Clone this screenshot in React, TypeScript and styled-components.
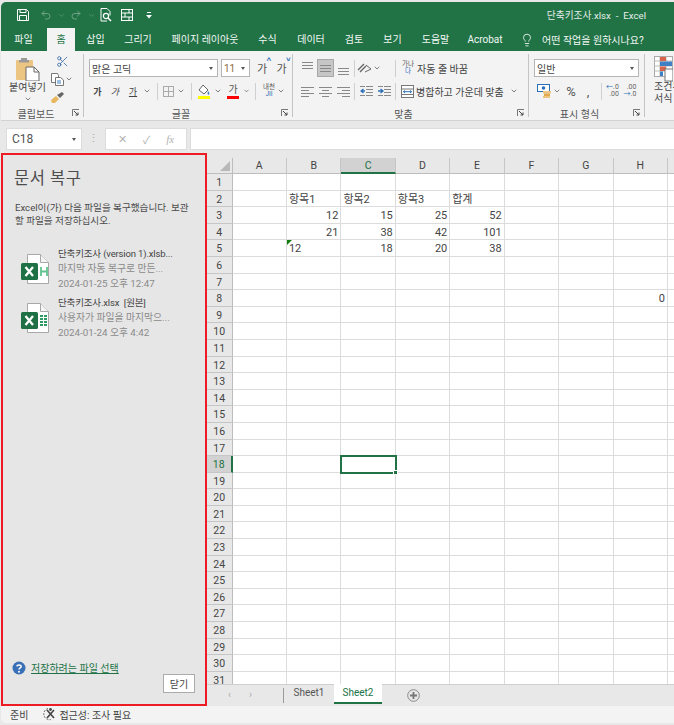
import { FC, ReactNode } from "react";
import styled, { createGlobalStyle } from "styled-components";
import { Lightbulb, Scissors, Undo2, Redo2, ChevronDown } from "lucide-react";

const font = `Roboto, "Noto Sans CJK KR", sans-serif`;

const GlobalStyle = createGlobalStyle`
  *, *::before, *::after { box-sizing: border-box; }
  html, body { margin: 0; padding: 0; background: #e8e8e8; }
  body { font-family: ${font}; color: #444; overflow: hidden; }
`;

const COLS = ["A", "B", "C", "D", "E", "F", "G", "H", "I"];
const ROW_COUNT = 31;

type Cell = { text: string; left?: boolean; flag?: boolean };
const CELLS: Record<string, Cell> = {
  B2: { text: "항목1", left: true },
  C2: { text: "항목2", left: true },
  D2: { text: "항목3", left: true },
  E2: { text: "합계", left: true },
  B3: { text: "12" },
  C3: { text: "15" },
  D3: { text: "25" },
  E3: { text: "52" },
  B4: { text: "21" },
  C4: { text: "38" },
  D4: { text: "42" },
  E4: { text: "101" },
  B5: { text: "12", left: true, flag: true },
  C5: { text: "18" },
  D5: { text: "20" },
  E5: { text: "38" },
  H8: { text: "0" },
};

const TABS = [
  { label: "파일", w: 39 },
  { label: "홈", w: 28, active: true },
  { label: "삽입", w: 41 },
  { label: "그리기", w: 44 },
  { label: "페이지 레이아웃", w: 90 },
  { label: "수식", w: 35 },
  { label: "데이터", w: 52 },
  { label: "검토", w: 34 },
  { label: "보기", w: 43 },
  { label: "도움말", w: 43 },
  { label: "Acrobat", w: 56 },
];

const Chevron: FC = () => <ChevronDown size={8} strokeWidth={2.2} color="#555" />;

const Launcher: FC = () => (
  <svg width="8" height="8" viewBox="0 0 8 8">
    <path d="M.5 7V.5H7" fill="none" stroke="#777" />
    <path d="M2 2l4 4M6 3.5V6H3.5" fill="none" stroke="#444" />
  </svg>
);

const SaveIcon: FC = () => (
  <svg width="12" height="12" viewBox="0 0 12 12" fill="none" stroke="#fff">
    <path d="M.5.5h9l2 2v9H.5z" />
    <path d="M3 .5v3h6v-3M2.5 11.5V6.5h7v5" />
  </svg>
);

const PreviewIcon: FC = () => (
  <svg width="12" height="14" viewBox="0 0 12 14" fill="none" stroke="#fff">
    <path d="M1 .5h6l3 3v4M1 .5v12.5h6" />
    <circle cx="6" cy="8" r="2.6" strokeWidth="1.2" />
    <path d="M8 10l3 3" strokeWidth="1.6" />
  </svg>
);

const FormIcon: FC = () => (
  <svg width="12" height="12" viewBox="0 0 12 12" fill="none" stroke="#fff">
    <rect x=".5" y=".5" width="11" height="11" />
    <path d="M.5 4h11M.5 8h11M4 4v4M8 8v3.5M8 .5V4" />
  </svg>
);

const CustomizeIcon: FC = () => (
  <svg width="6" height="7" viewBox="0 0 6 7" fill="#fff">
    <rect x="1" y="0" width="4" height="1" />
    <path d="M0 3h6L3 6.5z" />
  </svg>
);

const PasteIcon: FC = () => (
  <svg width="24" height="24" viewBox="0 0 24 24">
    <rect x="0" y="3" width="17" height="20" rx="1" fill="#edc583" />
    <path d="M5 3V1h6v2h2v2.500H3V3z" fill="#9a9a9a" />
    <path d="M10 10h8l5 5v9H10z" fill="#fff" stroke="#666" />
    <path d="M18 10v5h5" fill="none" stroke="#666" />
  </svg>
);

const CopyIcon: FC = () => (
  <svg width="13" height="13" viewBox="0 0 13 13" fill="#fff" stroke="#777">
    <path d="M.5.5h6l1 2v7H.5z" />
    <path d="M4.500 4.500h5l3 2.500v5.500h-8z" />
    <path d="M6 8h4M6 10h4" stroke="#3b7fc4" />
  </svg>
);

const PainterIcon: FC = () => (
  <svg width="13" height="11" viewBox="0 0 13 11">
    <path d="M0 8l5-4 3 3-4 4H1z" fill="#e8b860" />
    <path d="M6 3l3 3 4-4-2-2z" fill="#666" />
  </svg>
);

const BorderIcon: FC = () => (
  <svg width="11" height="11" viewBox="0 0 11 11" fill="none" stroke="#aaa">
    <rect x=".5" y=".5" width="10" height="10" />
    <path d="M5.500.5v10M.5 5.500h10" />
  </svg>
);

const FillIcon: FC = () => (
  <svg width="14" height="15" viewBox="0 0 14 15">
    <path d="M6 1l5 5-4 4-5-4z" fill="#fff" stroke="#666" />
    <path d="M11 7c1 1.500 2 2.500 1 3.500s-2-.5-1-3.500z" fill="#3b7fc4" />
    <rect x="1" y="12" width="12" height="3" fill="#ffff00" />
  </svg>
);

const Lines: FC<{ ys: number[]; x1?: number[]; x2?: number[] }> = ({ ys, x1, x2 }) => (
  <svg width="13" height="13" viewBox="0 0 13 13" stroke="#888" fill="none">
    {ys.map((y, i) => (
      <path key={y} d={`M${x1 ? x1[i] : 0} ${y + 0.5}H${x2 ? x2[i] : 13}`} />
    ))}
  </svg>
);

const OrientIcon: FC = () => (
  <svg width="15" height="13" viewBox="0 0 15 13" fill="none">
    <path d="M1 8l6-6M3 10l6-6" stroke="#666" strokeWidth="1.400" />
    <path d="M9 3l5 4-6 3" stroke="#666" />
  </svg>
);

const IndentIcon: FC<{ flip?: boolean }> = ({ flip }) => (
  <svg width="13" height="11" viewBox="0 0 13 11" fill="none">
    <path d="M6 .5h7M6 3.500h7M6 6.500h7M6 9.500h7M0 .5h5M0 9.500h5" stroke="#888" />
    {flip ? (
      <path d="M0 5h4M2.500 3L5 5 2.500 7" stroke="#2b6fb8" strokeWidth="1.300" />
    ) : (
      <path d="M5 5H1M3.500 3L1 5l2.500 2" stroke="#2b6fb8" strokeWidth="1.300" />
    )}
  </svg>
);

const MergeIcon: FC = () => (
  <svg width="13" height="13" viewBox="0 0 13 13" fill="#fff" stroke="#777">
    <rect x=".5" y=".5" width="12" height="12" />
    <path d="M.5 4h12M.5 9.500h12" />
    <path d="M2.500 6.700h8M4 5.500L2.500 6.700 4 8M9 5.500l1.500 1.200L9 8" stroke="#2b6fb8" fill="none" />
  </svg>
);

const MoneyIcon: FC = () => (
  <svg width="14" height="14" viewBox="0 0 14 14">
    <rect x=".5" y=".5" width="12" height="7" fill="#fff" stroke="#2b6fb8" />
    <circle cx="6.500" cy="4" r="1.800" fill="#2b6fb8" />
    <rect x="6" y="7" width="8" height="2.500" fill="#edc583" />
    <rect x="7" y="9.500" width="6" height="2.500" fill="#e0a94e" />
    <rect x="6" y="12" width="7" height="2" fill="#edc583" />
  </svg>
);

const DecimalIcon: FC<{ more?: boolean }> = ({ more }) => (
  <DecimalBox>
    <DecimalLine>
      {more ? <Arrow>←</Arrow> : null}
      {more ? ".0" : ".00"}
    </DecimalLine>
    <DecimalLine>
      {more ? null : <Arrow>→</Arrow>}
      {more ? ".00" : ".0"}
    </DecimalLine>
  </DecimalBox>
);

const CondIcon: FC = () => (
  <svg width="19" height="26" viewBox="0 0 19 26">
    <rect x=".5" y=".5" width="18" height="20" fill="#fff" stroke="#aaa" />
    <path d="M.5 5h18M.5 10h18M.5 15h18M6 .5v20M12 .5v20" stroke="#bbb" />
    <rect x="6" y="1" width="6" height="4" fill="#d9634a" />
    <rect x="6" y="5.500" width="12" height="4.500" fill="#3f7fc4" />
    <rect x="6" y="10.500" width="6" height="4.500" fill="#d9634a" />
    <rect x="6" y="15.500" width="3" height="4.500" fill="#3f7fc4" />
    <rect x="11" y="13" width="8" height="12" fill="#fff" stroke="#777" />
  </svg>
);

const FileIcon: FC<{ kind: "h" | "bars" }> = ({ kind }) => (
  <svg width="28" height="30" viewBox="0 0 28 30">
    <path d="M6.500.5h13l8 8v21h-21z" fill="#fff" stroke="#a8a8a8" />
    <path d="M19.500.5v8h8" fill="#f4f4f4" stroke="#a8a8a8" />
    {kind === "h" ? (
      <path d="M20 13v9M26 13v9M20 17.500h6" stroke="#5fc38d" strokeWidth="1.800" fill="none" />
    ) : (
      <path d="M19 13h7M19 16h7M19 19h7M19 22h7" stroke="#2e9a63" strokeWidth="1.800" fill="none" strokeDasharray="3 1" />
    )}
    <rect x="0" y="9" width="17" height="17" rx="1.500" fill="#1e7145" />
    <path d="M4.500 13l7.500 9M12 13l-7.500 9" stroke="#fff" strokeWidth="2.300" fill="none" />
  </svg>
);

const HelpIcon: FC = () => (
  <svg width="14" height="14" viewBox="0 0 14 14">
    <circle cx="7" cy="7" r="6.500" fill="#3a70b5" />
    <path d="M4.800 5.300C5 3.500 9 3.500 9.200 5.400 9.300 7 7 6.800 7 8.600" fill="none" stroke="#fff" strokeWidth="1.500" />
    <circle cx="7" cy="10.700" r="1" fill="#fff" />
  </svg>
);

const AccessIcon: FC = () => (
  <svg width="15" height="14" viewBox="0 0 15 14" fill="none">
    <path d="M6 1.500A5 5 0 1 0 9 12.500" stroke="#666" strokeDasharray="2 1.200" />
    <path d="M5 3l7 8M12 3l-7 8" stroke="#444" strokeWidth="1.600" />
    <circle cx="8.500" cy="2.500" r="1.400" fill="#444" />
  </svg>
);

const AddIcon: FC = () => (
  <svg width="13" height="13" viewBox="0 0 13 13">
    <circle cx="6.500" cy="6.500" r="5.800" fill="none" stroke="#888" />
    <path d="M6.500 3v7M3 6.500h7" stroke="#777" strokeWidth="1.800" />
  </svg>
);

const Group: FC<{ w: number; label?: string; children: ReactNode }> = ({ w, label, children }) => (
  <GroupBox $w={w}>
    <GroupBody>{children}</GroupBody>
    {label ? (
      <GroupFoot>
        <GroupLabel>{label}</GroupLabel>
        <LauncherBox>
          <Launcher />
        </LauncherBox>
      </GroupFoot>
    ) : null}
  </GroupBox>
);

const App: FC = () => {
  const rows = Array.from({ length: ROW_COUNT }, (_, i) => i + 1);
  return (
    <Page>
      <GlobalStyle />
      <TitleBar>
        <QuickBar>
          <QuickSlot $w={24}><SaveIcon /></QuickSlot>
          <QuickSlot $w={22} $dim><Undo2 size={12} color="#fff" /></QuickSlot>
          <QuickSlot $w={8} $dim><ChevronDown size={7} color="#fff" /></QuickSlot>
          <QuickSlot $w={22} $dim><Redo2 size={12} color="#fff" /></QuickSlot>
          <QuickSlot $w={8} $dim><ChevronDown size={7} color="#fff" /></QuickSlot>
          <QuickSlot $w={22}><PreviewIcon /></QuickSlot>
          <QuickSlot $w={20}><FormIcon /></QuickSlot>
          <QuickSlot $w={24}><CustomizeIcon /></QuickSlot>
        </QuickBar>
        <DocTitle>단축키조사.xlsx&nbsp; - &nbsp;Excel</DocTitle>
      </TitleBar>

      <TabBar>
        {TABS.map((t) => (
          <Tab key={t.label} $w={t.w} $active={t.active}>{t.label}</Tab>
        ))}
        <SearchHint>
          <Lightbulb size={14} strokeWidth={1.4} color="#fff" />
          <span>어떤 작업을 원하시나요?</span>
        </SearchHint>
      </TabBar>

      <Ribbon>
        <Group w={80} label="클립보드">
          <ClipLayout>
            <PasteColumn>
              <PasteIcon />
              <PasteLabel>붙여넣기</PasteLabel>
              <Chevron />
            </PasteColumn>
            <ClipTools>
              <Slot $w={24} $h={18}><Scissors size={13} strokeWidth={1.4} color="#2b5f9e" /></Slot>
              <ToolRow>
                <Slot $w={14} $h={18}><CopyIcon /></Slot>
                <Slot $w={10} $h={18}><Chevron /></Slot>
              </ToolRow>
              <Slot $w={14} $h={18}><PainterIcon /></Slot>
            </ClipTools>
          </ClipLayout>
        </Group>
        <Divider />
        <Group w={208} label="글꼴">
          <ToolRow>
            <SelectBox $w={129}><span>맑은 고딕</span><Caret /></SelectBox>
            <SelectBox $w={29} $ml={3} $accent><span>11</span><Caret /></SelectBox>
            <Slot $w={20} $ml={2}><BigGa>가<Up>˄</Up></BigGa></Slot>
            <Slot $w={19}><BigGa>가<Up>˅</Up></BigGa></Slot>
          </ToolRow>
          <ToolRow>
            <Slot $w={17}><SmallGa $bold>가</SmallGa></Slot>
            <Slot $w={18}><SmallGa $italic>가</SmallGa></Slot>
            <Slot $w={18}><SmallGa $under>가</SmallGa></Slot>
            <Slot $w={10}><Chevron /></Slot>
            <RowSep $l={5} $r={4} />
            <Slot $w={13}><BorderIcon /></Slot>
            <Slot $w={12}><Chevron /></Slot>
            <RowSep $l={4} $r={4} />
            <Slot $w={16}><FillIcon /></Slot>
            <Slot $w={11}><Chevron /></Slot>
            <Slot $w={20}><ColorGa>가</ColorGa></Slot>
            <Slot $w={7}><Chevron /></Slot>
            <RowSep $l={5} $r={5} />
            <Slot $w={16}>
              <WrapGlyph>내천<Blue>JII</Blue></WrapGlyph>
            </Slot>
            <Slot $w={8}><Chevron /></Slot>
          </ToolRow>
        </Group>
        <Divider />
        <Group w={235} label="맞춤">
          <ToolRow>
            <Slot $w={19}><Lines ys={[0, 3, 6]} x1={[1, 1, 1]} x2={[12, 12, 12]} /></Slot>
            <Slot $w={17} $pressed><Lines ys={[3, 6, 9]} x1={[1, 1, 1]} x2={[12, 12, 12]} /></Slot>
            <Slot $w={18}><Lines ys={[6, 9, 12]} x1={[1, 1, 1]} x2={[12, 12, 12]} /></Slot>
            <RowSep $l={2} $r={2} />
            <Slot $w={15}><OrientIcon /></Slot>
            <Slot $w={10}><Chevron /></Slot>
            <RowSep $l={13} $r={3} />
            <Slot $w={18}><WrapGlyph>가나<Blue>다</Blue></WrapGlyph></Slot>
            <ToolText>자동 줄 바꿈</ToolText>
          </ToolRow>
          <ToolRow>
            <Slot $w={18}><Lines ys={[2, 5, 8, 11]} x2={[13, 8, 13, 8]} /></Slot>
            <Slot $w={18}><Lines ys={[2, 5, 8, 11]} x1={[0, 3, 0, 3]} x2={[13, 10, 13, 10]} /></Slot>
            <Slot $w={18}><Lines ys={[2, 5, 8, 11]} x1={[0, 5, 0, 5]} /></Slot>
            <RowSep $l={2} $r={2} />
            <Slot $w={18}><IndentIcon /></Slot>
            <Slot $w={18}><IndentIcon flip /></Slot>
            <RowSep $l={2} $r={3} />
            <Slot $w={17}><MergeIcon /></Slot>
            <ToolText>병합하고 가운데 맞춤</ToolText>
            <Slot $w={16} $ml={2}><Chevron /></Slot>
          </ToolRow>
        </Group>
        <Divider />
        <Group w={115} label="표시 형식">
          <ToolRow>
            <SelectBox $w={105}><span>일반</span><Caret /></SelectBox>
          </ToolRow>
          <ToolRow>
            <Slot $w={19}><MoneyIcon /></Slot>
            <Slot $w={8}><Chevron /></Slot>
            <Slot $w={20}><Percent>%</Percent></Slot>
            <Slot $w={14}><Percent>,</Percent></Slot>
            <RowSep $l={6} $r={3} />
            <Slot $w={15}><DecimalIcon more /></Slot>
            <Slot $w={20}><DecimalIcon /></Slot>
          </ToolRow>
        </Group>
        <Divider />
        <CondGroup>
          <CondIcon />
          <CondLabel>조건부<br />서식</CondLabel>
        </CondGroup>
      </Ribbon>

      <FormulaRow>
        <NameBox><span>C18</span><Caret /></NameBox>
        <GripDots>⋮</GripDots>
        <FxBox>
          <span>✕</span>
          <span>✓</span>
          <Fx>fx</Fx>
        </FxBox>
        <FormulaInput />
      </FormulaRow>

      <Main>
        <RecoveryPanel>
          <PanelTitle>문서 복구</PanelTitle>
          <PanelText>Excel이(가) 다음 파일을 복구했습니다. 보관할 파일을 저장하십시오.</PanelText>
          <FileList>
            <FileItem>
              <FileIcon kind="h" />
              <FileInfo>
                <FileName>단축키조사 (version 1).xlsb...</FileName>
                <FileMeta>마지막 자동 복구로 만든...</FileMeta>
                <FileMeta>2024-01-25 오후 12:47</FileMeta>
              </FileInfo>
            </FileItem>
            <FileItem>
              <FileIcon kind="bars" />
              <FileInfo>
                <FileName>단축키조사.xlsx&nbsp; [원본]</FileName>
                <FileMeta>사용자가 파일을 마지막으...</FileMeta>
                <FileMeta>2024-01-24 오후 4:42</FileMeta>
              </FileInfo>
            </FileItem>
          </FileList>
          <PanelFoot>
            <HelpRow>
              <HelpIcon />
              <HelpLink>저장하려는 파일 선택</HelpLink>
            </HelpRow>
            <CloseButton>닫기</CloseButton>
          </PanelFoot>
        </RecoveryPanel>

        <SheetArea>
          <SheetGrid>
            <Corner><CornerMark /></Corner>
            {COLS.map((c) => (
              <ColHead key={c} $active={c === "C"}>{c}</ColHead>
            ))}
            {rows.map((r) => [
              <RowHead key={`h${r}`} $active={r === 18}>{r}</RowHead>,
              ...COLS.map((c) => {
                const cell = CELLS[`${c}${r}`];
                return (
                  <GridCell key={`${c}${r}`} $left={cell?.left} $selected={c === "C" && r === 18} $flag={cell?.flag}>
                    {cell?.text}
                  </GridCell>
                );
              }),
            ])}
          </SheetGrid>
          <SheetTabs>
            <NavArrow>‹</NavArrow>
            <NavArrow>›</NavArrow>
            <TabSep />
            <SheetTab $w={50}>Sheet1</SheetTab>
            <SheetTab $w={48} $active>Sheet2</SheetTab>
            <AddSheet><AddIcon /></AddSheet>
          </SheetTabs>
        </SheetArea>
      </Main>

      <StatusBar>
        <span>준비</span>
        <AccessBox>
          <AccessIcon />
          <AccessText>접근성: 조사 필요</AccessText>
        </AccessBox>
      </StatusBar>
    </Page>
  );
};

const Page = styled.div`
  width: 674px;
  height: 725px;
  padding-top: 2px;
  display: flex;
  flex-direction: column;
  overflow: hidden;
  background: #e8e8e8;
  font-size: 10.5px;
`;

const TitleBar = styled.div`
  height: 23px;
  margin-left: 1px;
  background: #217346;
  border-radius: 5px 0 0 0;
  display: flex;
  align-items: center;
  justify-content: space-between;
  padding: 3px 28px 0 10px;
  flex: none;
`;

const QuickBar = styled.div`
  display: flex;
  align-items: center;
`;

const QuickSlot = styled.div<{ $w: number; $dim?: boolean }>`
  width: ${(p) => p.$w}px;
  display: flex;
  justify-content: center;
  opacity: ${(p) => (p.$dim ? 0.35 : 1)};
`;

const DocTitle = styled.div`
  color: #e4efe9;
  font-size: 9.7px;
`;

const TabBar = styled.div`
  height: 26px;
  margin-left: 1px;
  padding-left: 3px;
  background: #217346;
  display: flex;
  align-items: flex-end;
  flex: none;
`;

const Tab = styled.div<{ $w: number; $active?: boolean }>`
  width: ${(p) => p.$w}px;
  margin-left: ${(p) => (p.$active ? 4 : 0)}px;
  height: 23px;
  line-height: 23px;
  text-align: center;
  color: ${(p) => (p.$active ? "#217346" : "#f2f7f4")};
  background: ${(p) => (p.$active ? "#f3f3f3" : "transparent")};
  font-size: 10px;
  white-space: nowrap;
`;

const SearchHint = styled.div`
  display: flex;
  align-items: center;
  gap: 8px;
  height: 23px;
  margin-left: 7px;
  color: #f2f7f4;
  font-size: 10px;
  white-space: nowrap;
`;

const Ribbon = styled.div`
  height: 70px;
  background: #f3f3f3;
  border-bottom: 1px solid #d2d2d2;
  display: flex;
  padding-left: 2px;
  flex: none;
  margin-left: 1px;
  overflow: hidden;
`;

const Divider = styled.div`
  width: 1px;
  margin: 3px 0 3px;
  background: #c4c4c4;
  flex: none;
`;

const GroupBox = styled.div<{ $w: number }>`
  width: ${(p) => p.$w}px;
  flex: none;
  display: flex;
  flex-direction: column;
`;

const GroupBody = styled.div`
  flex: 1;
  min-height: 0;
  padding: 8px 0 0 5px;
  display: flex;
  flex-direction: column;
  gap: 5px;
`;

const GroupFoot = styled.div`
  height: 14px;
  display: flex;
  align-items: center;
  flex: none;
`;

const GroupLabel = styled.div`
  flex: 1;
  text-align: center;
  font-size: 10px;
  color: #555;
`;

const LauncherBox = styled.div`
  width: 14px;
  display: flex;
  justify-content: center;
`;

const ToolRow = styled.div`
  display: flex;
  align-items: center;
  height: 18px;
`;

const Slot = styled.div<{ $w: number; $h?: number; $ml?: number; $pressed?: boolean }>`
  width: ${(p) => p.$w}px;
  height: ${(p) => p.$h ?? 18}px;
  margin-left: ${(p) => p.$ml ?? 0}px;
  flex: none;
  display: flex;
  align-items: center;
  justify-content: center;
  background: ${(p) => (p.$pressed ? "#c6c6c6" : "transparent")};
  border: ${(p) => (p.$pressed ? "1px solid #a8a8a8" : "none")};
`;

const RowSep = styled.div<{ $l: number; $r: number }>`
  width: 1px;
  height: 17px;
  background: #cfcfcf;
  margin: 0 ${(p) => p.$r}px 0 ${(p) => p.$l}px;
  flex: none;
`;

const ClipLayout = styled.div`
  display: flex;
  margin-top: -4px;
`;

const PasteColumn = styled.div`
  width: 45px;
  margin-left: -3px;
  display: flex;
  flex-direction: column;
  align-items: center;
  padding-top: 2px;
  flex: none;
`;

const PasteLabel = styled.div`
  font-size: 10px;
  line-height: 14px;
  white-space: nowrap;
`;

const ClipTools = styled.div`
  display: flex;
  flex-direction: column;
  margin-top: -3px;
`;

const SelectBox = styled.div<{ $w: number; $ml?: number; $accent?: boolean }>`
  width: ${(p) => p.$w}px;
  height: 18px;
  margin-left: ${(p) => p.$ml ?? 0}px;
  flex: none;
  background: #fff;
  border: 1px solid #b5b5b5;
  display: flex;
  align-items: center;
  justify-content: space-between;
  padding: 0 4px 0 2px;
  font-size: 10px;
  color: ${(p) => (p.$accent ? "#8a6a35" : "#444")};
`;

const Caret = styled.i`
  width: 0;
  height: 0;
  border-left: 2.5px solid transparent;
  border-right: 2.5px solid transparent;
  border-top: 3px solid #555;
`;

const BigGa = styled.span`
  position: relative;
  font-size: 11px;
  color: #555;
`;

const Up = styled.b`
  position: absolute;
  right: -4px;
  top: -5px;
  color: #2b6fb8;
  font-size: 8px;
`;

const SmallGa = styled.span<{ $bold?: boolean; $italic?: boolean; $under?: boolean }>`
  font-size: 9px;
  font-weight: ${(p) => (p.$bold ? 700 : 400)};
  font-style: ${(p) => (p.$italic ? "italic" : "normal")};
  text-decoration: ${(p) => (p.$under ? "underline" : "none")};
  color: #444;
`;

const ColorGa = styled.span`
  font-size: 10px;
  line-height: 13px;
  border-bottom: 3px solid #ff0000;
  padding: 0 1.5px;
  color: #555;
`;

const WrapGlyph = styled.span`
  display: flex;
  flex-direction: column;
  align-items: center;
  font-size: 6.5px;
  line-height: 7px;
  color: #555;
`;

const Blue = styled.span`
  color: #2b6fb8;
`;

const ToolText = styled.span`
  font-size: 10px;
  white-space: nowrap;
  color: #444;
`;

const Percent = styled.span`
  font-size: 13px;
  color: #555;
`;

const DecimalBox = styled.div`
  display: flex;
  flex-direction: column;
  align-items: flex-end;
  font-size: 7px;
  line-height: 7px;
  color: #666;
`;

const DecimalLine = styled.div`
  display: flex;
`;

const Arrow = styled.span`
  color: #2b6fb8;
`;

const CondGroup = styled.div`
  width: 30px;
  flex: none;
  display: flex;
  flex-direction: column;
  align-items: flex-start;
  padding: 5px 0 0 9px;
  font-size: 10px;
  line-height: 12px;
  white-space: nowrap;
`;

const CondLabel = styled.div`
  margin-top: -1px;
`;

const FormulaRow = styled.div`
  height: 31px;
  flex: none;
  padding: 7px 0 2px 6px;
  display: flex;
  background: #e8e8e8;
`;

const NameBox = styled.div`
  width: 76px;
  flex: none;
  background: #fff;
  border: 1px solid #dcdcdc;
  display: flex;
  align-items: center;
  justify-content: space-between;
  padding: 0 5px;
  font-size: 12px;
  color: #555;
`;

const GripDots = styled.div`
  width: 23px;
  text-align: center;
  line-height: 22px;
  color: #aaa;
  font-size: 11px;
`;

const FxBox = styled.div`
  width: 82px;
  flex: none;
  background: #fff;
  border: 1px solid #dcdcdc;
  display: flex;
  align-items: center;
  justify-content: space-around;
  padding: 0 4px;
  color: #b4b4b4;
  font-size: 11px;
`;

const Fx = styled.i`
  font-family: "Liberation Serif", serif;
`;

const FormulaInput = styled.div`
  flex: 1;
  margin-left: 3px;
  background: #fff;
  border: 1px solid #dcdcdc;
  border-right: none;
`;

const Main = styled.div`
  flex: 1;
  min-height: 0;
  display: flex;
`;

const RecoveryPanel = styled.aside`
  width: 206px;
  margin: 1px 0 0 1px;
  flex: none;
  border: 2px solid #ed1c24;
  background: #e6e6e6;
  padding: 12px 8px 11px 10px;
  display: flex;
  flex-direction: column;
`;

const PanelTitle = styled.h2`
  margin: 0 0 0 1px;
  font-size: 16.5px;
  font-weight: 400;
  line-height: 24px;
  letter-spacing: 0.5px;
  color: #4d4d4d;
`;

const PanelText = styled.p`
  margin: 11px 0 0 2px;
  font-size: 9.6px;
  line-height: 12.5px;
  color: #4a4a4a;
`;

const FileList = styled.div`
  margin: 24px 0 0 8px;
  display: flex;
  flex-direction: column;
  gap: 2px;
`;

const FileItem = styled.div`
  display: flex;
  align-items: flex-start;
  gap: 9px;
  height: 47px;
  svg {
    margin-top: 3px;
    flex: none;
  }
`;

const FileInfo = styled.div`
  display: flex;
  flex-direction: column;
  gap: 1px;
  margin-top: -4px;
`;

const FileName = styled.div`
  font-size: 9.5px;
  line-height: 14px;
  letter-spacing: -0.15px;
  color: #444;
  white-space: nowrap;
`;

const FileMeta = styled.div`
  font-size: 9.8px;
  line-height: 14px;
  color: #8a8a8a;
  white-space: nowrap;
`;

const PanelFoot = styled.div`
  margin-top: auto;
  display: flex;
  flex-direction: column;
  padding-right: 2px;
`;

const HelpRow = styled.div`
  display: flex;
  align-items: center;
  gap: 5px;
  margin-left: -1px;
`;

const HelpLink = styled.span`
  color: #217346;
  text-decoration: underline;
  font-size: 10px;
`;

const CloseButton = styled.button`
  align-self: flex-end;
  width: 32px;
  height: 19px;
  margin: -1px 0 0;
  padding: 0;
  background: #fff;
  border: 1px solid #ababab;
  border-radius: 0;
  font-family: ${font};
  font-size: 10px;
  color: #444;
`;

const SheetArea = styled.section`
  flex: 1;
  min-width: 0;
  display: flex;
  flex-direction: column;
  background: #e8e8e8;
`;

const SheetGrid = styled.div`
  flex: 1;
  min-height: 0;
  margin-top: 6px;
  overflow: hidden;
  display: grid;
  grid-template-columns: 25.5px repeat(9, 54.45px);
  grid-template-rows: 16px repeat(${ROW_COUNT}, 16.6px);
  background: #fff;
`;

const Corner = styled.div`
  background: #e8e8e8;
  border-right: 1px solid #bdbdbd;
  border-bottom: 1px solid #bdbdbd;
  display: flex;
  align-items: flex-end;
  justify-content: flex-end;
  padding: 0 2px 2px 0;
`;

const CornerMark = styled.i`
  width: 0;
  height: 0;
  border-left: 10px solid transparent;
  border-bottom: 10px solid #b8b8b8;
`;

const ColHead = styled.div<{ $active?: boolean }>`
  background: ${(p) => (p.$active ? "#d2d2d2" : "#e8e8e8")};
  border-right: 1px solid #c6c6c6;
  border-bottom: ${(p) => (p.$active ? "2px solid #217346" : "1px solid #bdbdbd")};
  color: ${(p) => (p.$active ? "#217346" : "#444")};
  text-align: center;
  line-height: 15px;
  font-size: 10.5px;
`;

const RowHead = styled.div<{ $active?: boolean }>`
  background: ${(p) => (p.$active ? "#d2d2d2" : "#e8e8e8")};
  border-right: ${(p) => (p.$active ? "2px solid #217346" : "1px solid #bdbdbd")};
  border-bottom: 1px solid #c6c6c6;
  color: ${(p) => (p.$active ? "#217346" : "#444")};
  text-align: center;
  line-height: 17px;
  font-size: 10.5px;
`;

const GridCell = styled.div<{ $left?: boolean; $selected?: boolean; $flag?: boolean }>`
  position: relative;
  border-right: 1px solid #dcdcdc;
  border-bottom: 1px solid #dcdcdc;
  padding: 0 2px;
  text-align: ${(p) => (p.$left ? "left" : "right")};
  line-height: 17.5px;
  font-size: 11px;
  color: #444;
  white-space: nowrap;
  ${(p) =>
    p.$selected
      ? `outline: 2px solid #217346; outline-offset: -1px; z-index: 1;
         &::after { content: ""; position: absolute; right: -3px; bottom: -3px; width: 5px; height: 5px;
         background: #217346; border: 1px solid #fff; }`
      : ""}
  ${(p) =>
    p.$flag
      ? `&::before { content: ""; position: absolute; left: 0; top: 0; border-top: 5px solid #107c10;
         border-right: 5px solid transparent; }`
      : ""}
`;

const SheetTabs = styled.div`
  height: 22px;
  flex: none;
  background: #e8e8e8;
  border-top: 1px solid #cfcfcf;
  display: flex;
  align-items: stretch;
  font-size: 10px;
  padding-left: 12px;
`;

const NavArrow = styled.div`
  width: 21px;
  text-align: center;
  line-height: 19px;
  color: #aaa;
`;

const TabSep = styled.div`
  width: 1px;
  height: 15px;
  margin: 3px 0 0 22px;
  background: #9a9a9a;
`;

const SheetTab = styled.div<{ $w: number; $active?: boolean }>`
  width: ${(p) => p.$w}px;
  text-align: center;
  line-height: 18px;
  margin-top: -1px;
  height: 20px;
  background: ${(p) => (p.$active ? "#fff" : "transparent")};
  color: ${(p) => (p.$active ? "#217346" : "#555")};
  border-bottom: ${(p) => (p.$active ? "2px solid #217346" : "none")};
`;

const AddSheet = styled.div`
  margin-left: 25px;
  display: flex;
  align-items: center;
`;

const StatusBar = styled.div`
  height: 17px;
  margin: 0 0 2px 1px;
  flex: none;
  background: #f3f3f3;
  border-radius: 0 0 0 5px;
  display: flex;
  align-items: center;
  padding: 0 0 1px 9px;
  font-size: 10px;
  color: #444;
`;

const AccessBox = styled.div`
  display: flex;
  align-items: center;
  gap: 2px;
  margin-left: 14px;
`;

const AccessText = styled.span`
  color: #444;
`;

export default App;
